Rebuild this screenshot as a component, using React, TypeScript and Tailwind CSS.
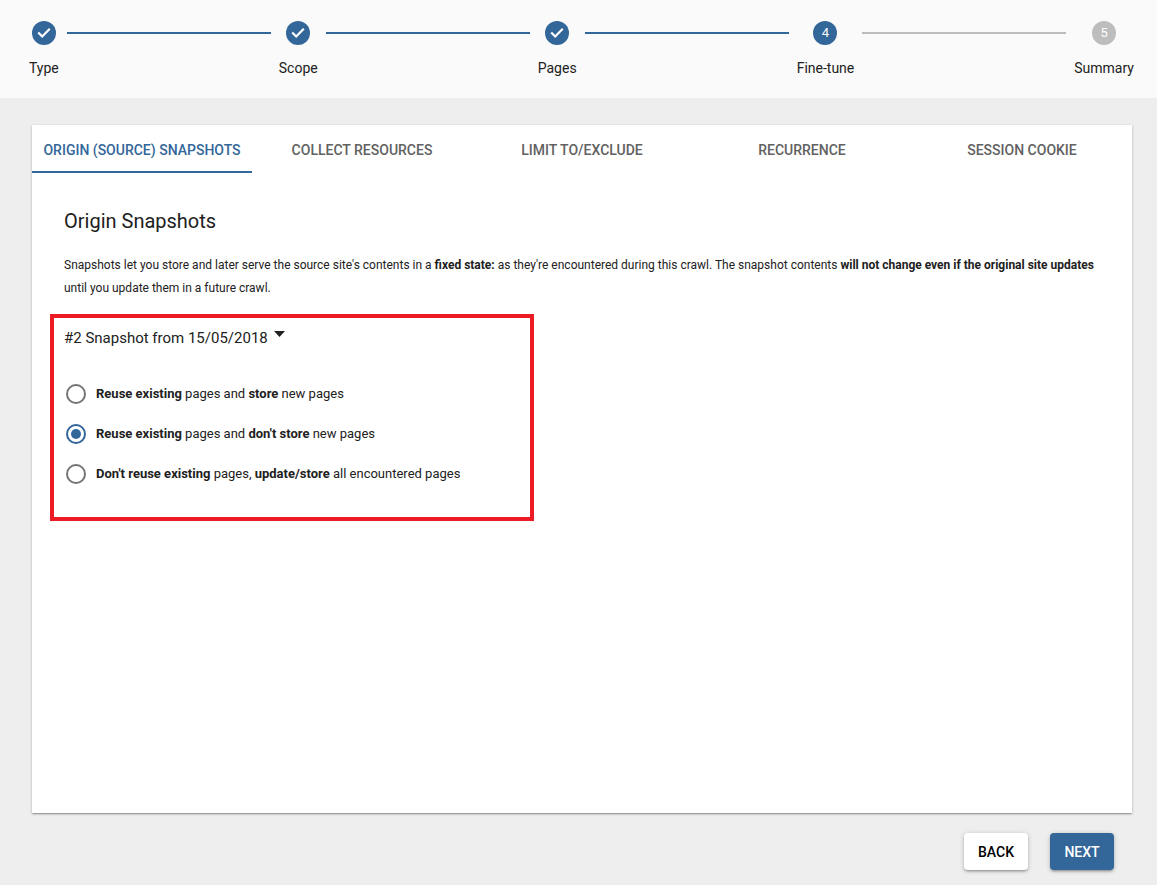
import React from 'react'

const steps = [
  { label: 'Type', state: 'done' },
  { label: 'Scope', state: 'done' },
  { label: 'Pages', state: 'done' },
  { label: 'Fine-tune', state: 'active' },
  { label: 'Summary', state: 'todo' },
]

const tabs = ['Origin (source) snapshots', 'Collect resources', 'Limit to/exclude', 'Recurrence', 'Session cookie']

function StepIcon({ state, n }: { state: string; n: number }) {
  if (state === 'done') {
    return (
      <div className="flex h-6 w-6 items-center justify-center rounded-full bg-[#336699]">
        <svg width="14" height="14" viewBox="0 0 14 14" fill="none">
          <path d="M2 7.3l3.2 3.2L12 3.6" stroke="white" strokeWidth="2.2" strokeLinecap="square" />
        </svg>
      </div>
    )
  }
  return (
    <div
      className={
        state === 'active'
          ? 'flex h-6 w-6 items-center justify-center rounded-full bg-[#336699] text-[13px] text-white'
          : 'flex h-6 w-6 items-center justify-center rounded-full bg-[#bdbdbd] text-[13px] text-white'
      }
    >
      {n}
    </div>
  )
}

function Radio({ checked, children }: { checked?: boolean; children: React.ReactNode }) {
  return (
    <label className="flex h-10 items-center">
      <span className="flex h-6 w-6 items-center justify-center">
        {checked ? (
          <span className="flex h-5 w-5 items-center justify-center rounded-full border-2 border-[#336699]">
            <span className="h-[10px] w-[10px] rounded-full bg-[#336699]" />
          </span>
        ) : (
          <span className="h-5 w-5 rounded-full border-2 border-[#757575]" />
        )}
      </span>
      <span className="ml-2 text-[13px] text-[#212121]">{children}</span>
    </label>
  )
}

export default function App() {
  return (
    <div className="min-h-screen bg-[#eeeeee] font-['Roboto',sans-serif] text-[#212121]">
      {/* Stepper */}
      <header className="flex h-[98px] items-start bg-[#fafafa] pl-[29px] pr-[23px] pt-[21px]">
        {steps.map((s, i) => (
          <React.Fragment key={s.label}>
            <div className="flex flex-col items-center">
              <StepIcon state={s.state} n={i + 1} />
              <span className="mt-[15px] text-sm leading-4 text-[#212121]">{s.label}</span>
            </div>
            {i < steps.length - 1 && (
              <div
                className={
                  i < 3
                    ? 'mx-2 mt-[11px] h-[2px] flex-1 bg-[#336699]'
                    : 'mx-2 mt-[11px] h-[2px] flex-1 bg-[#bdbdbd]'
                }
              />
            )}
          </React.Fragment>
        ))}
      </header>

      <main className="px-[32px] pt-[27px]">
        <div className="h-[688px] w-[1100px] bg-white shadow-[0_1px_3px_rgba(0,0,0,0.2),0_1px_1px_rgba(0,0,0,0.14),0_2px_1px_-1px_rgba(0,0,0,0.12)]">
          {/* Tabs */}
          <div className="grid h-12 grid-cols-5">
            {tabs.map((t, i) => (
              <div
                key={t}
                className={
                  i === 0
                    ? 'flex items-center justify-center border-b-2 border-[#336699] pt-[3px] text-sm font-medium uppercase text-[#336699]'
                    : 'flex items-center justify-center pt-[1px] text-sm font-medium uppercase text-[#616161]'
                }
              >
                {t}
              </div>
            ))}
          </div>

          <div className="px-8 pt-9">
            <h2 className="text-xl leading-6 text-[#212121]">Origin Snapshots</h2>
            <p className="mt-[21px] text-xs leading-[23px] text-[#212121]">
              Snapshots let you store and later serve the source site's contents in a <b className="font-bold">fixed state:</b> as
              they're encountered during this crawl. The snapshot contents{' '}
              <b className="font-bold">will not change even if the original site updates</b> until you update them in a future
              crawl.
            </p>

            <div className="relative mt-[26px]">
              <div className="flex items-start">
                <span className="text-[15px] leading-6 text-[#212121]">#2 Snapshot from 15/05/2018</span>
                <svg className="ml-[6px] mt-[5px]" width="11" height="6" viewBox="0 0 11 6">
                  <path d="M0 0h11L5.5 6z" fill="#212121" />
                </svg>
              </div>

              <div className="mt-6 flex flex-col">
                <Radio>
                  <b className="font-bold">Reuse existing</b> pages and <b className="font-bold">store</b> new pages
                </Radio>
                <Radio checked>
                  <b className="font-bold">Reuse existing</b> pages and <b className="font-bold">don't store</b> new pages
                </Radio>
                <Radio>
                  <b className="font-bold">Don't reuse existing</b> pages, <b className="font-bold">update/store</b> all encountered
                  pages
                </Radio>
              </div>

              {/* annotation frame */}
              <div className="pointer-events-none absolute left-[-14px] top-[-12px] h-[207px] w-[484px] border-4 border-[#ed1c24]" />
            </div>
          </div>
        </div>

        <div className="mt-5 flex justify-end gap-[22px] pr-[11px]">
          <button className="h-[37px] w-16 rounded-[4px] bg-white text-sm font-medium text-black shadow-[0_1px_5px_rgba(0,0,0,0.2),0_2px_2px_rgba(0,0,0,0.14),0_3px_1px_-2px_rgba(0,0,0,0.12)]">
            BACK
          </button>
          <button className="h-[37px] w-16 rounded-[4px] bg-[#336699] text-sm font-medium text-white shadow-[0_1px_5px_rgba(0,0,0,0.2),0_2px_2px_rgba(0,0,0,0.14),0_3px_1px_-2px_rgba(0,0,0,0.12)]">
            NEXT
          </button>
        </div>
      </main>
    </div>
  )
}
